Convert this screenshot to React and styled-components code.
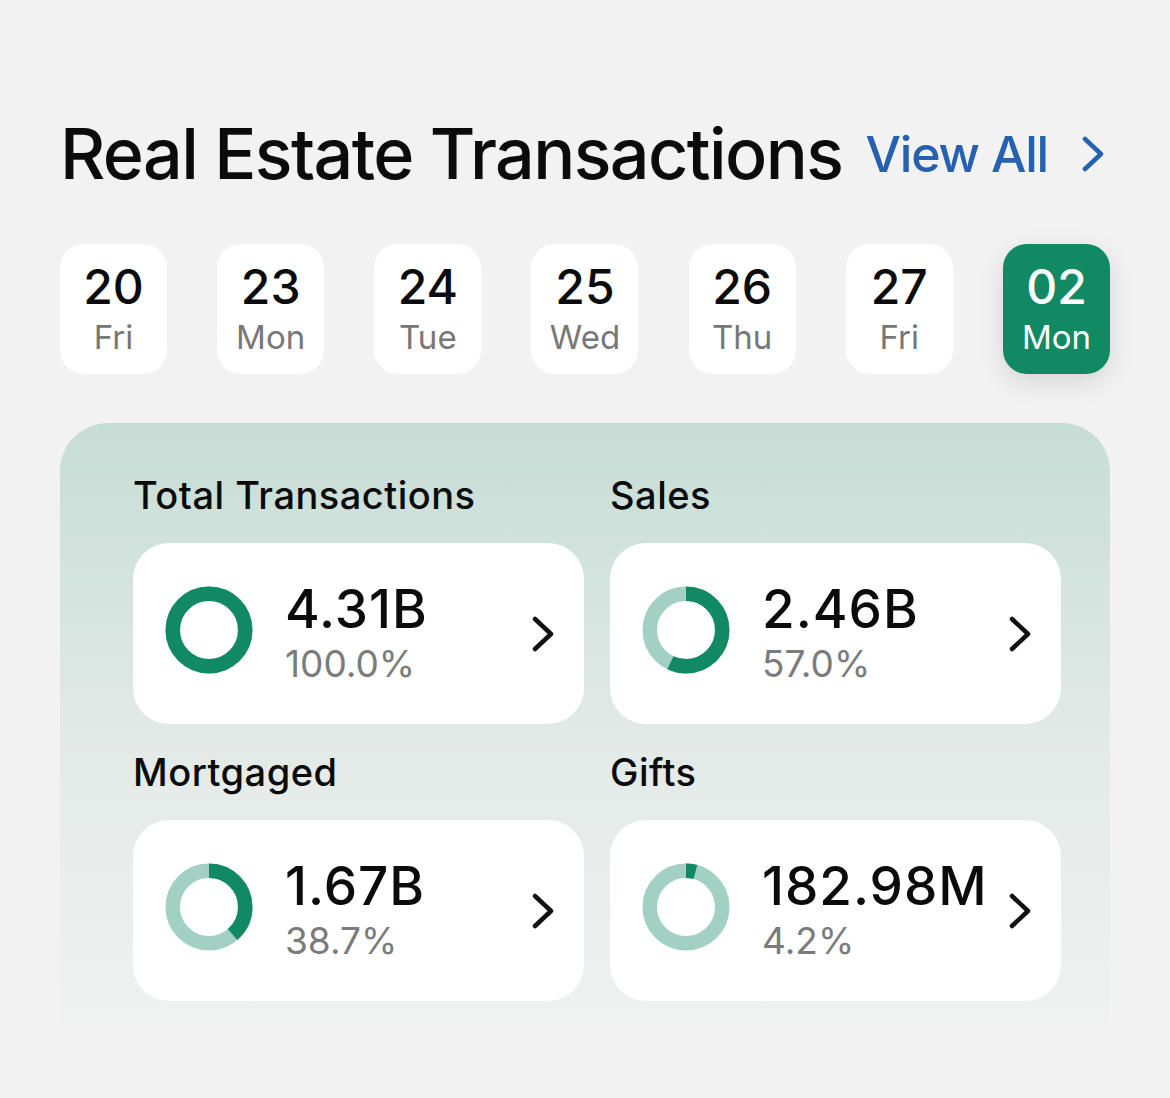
import React from 'react';
import styled, { createGlobalStyle, css } from 'styled-components';

const GlobalStyle = createGlobalStyle`
  body {
    margin: 0;
    background: #f2f2f2;
    font-family: Inter, "Noto Sans", sans-serif;
    -webkit-font-smoothing: antialiased;
  }
`;

const days = [
  { num: '20', day: 'Fri' },
  { num: '23', day: 'Mon' },
  { num: '24', day: 'Tue' },
  { num: '25', day: 'Wed' },
  { num: '26', day: 'Thu' },
  { num: '27', day: 'Fri' },
  { num: '02', day: 'Mon', active: true },
];

const stats = [
  { label: 'Total Transactions', value: '4.31B', pct: 100.0 },
  { label: 'Sales', value: '2.46B', pct: 57.0 },
  { label: 'Mortgaged', value: '1.67B', pct: 38.7 },
  { label: 'Gifts', value: '182.98M', pct: 4.2 },
];

const Chevron = ({ color = '#111', width = 22, height = 36, stroke = 4.5 }) => (
  <svg width={width} height={height} viewBox="0 0 22 36" fill="none">
    <polyline
      points="3,3 19,18 3,33"
      stroke={color}
      strokeWidth={stroke}
      strokeLinecap="round"
      strokeLinejoin="round"
    />
  </svg>
);

const Donut = ({ pct }) => {
  const r = 36.25;
  const c = 2 * Math.PI * r;
  return (
    <DonutSvg width="88" height="88" viewBox="0 0 88 88">
      <circle cx="44" cy="44" r={r} fill="none" stroke="#a2d1c3" strokeWidth="14.5" />
      <circle
        cx="44"
        cy="44"
        r={r}
        fill="none"
        stroke="#118a64"
        strokeWidth="14.5"
        strokeDasharray={`${(c * pct) / 100} ${c}`}
        transform="rotate(-90 44 44)"
      />
    </DonutSvg>
  );
};

const App = () => {
  return (
    <>
      <GlobalStyle />
      <Page>
        <Header>
          <Title>Real Estate Transactions</Title>
          <ViewAll>
            View All
            <Chevron color="#2660b0" width={22} height={36} stroke={4.5} />
          </ViewAll>
        </Header>

        <DateRow>
          {days.map((d, idx) => (
            <DateChip key={idx} active={d.active}>
              <DateNum>{d.num}</DateNum>
              <DateDay>{d.day}</DateDay>
            </DateChip>
          ))}
        </DateRow>

        <Panel>
          {stats.map((s, idx) => (
            <Stat key={idx}>
              <StatLabel>{s.label}</StatLabel>
              <StatCard>
                <Donut pct={s.pct} />
                <StatText>
                  <StatValue>{s.value}</StatValue>
                  <StatPct>{s.pct.toFixed(1)}%</StatPct>
                </StatText>
                <Chevron />
              </StatCard>
            </Stat>
          ))}
        </Panel>
      </Page>
    </>
  );
};

// custom styled components
const Page = styled.div`
  width: 1050px;
  padding: 112px 60px 48px;
`;

const Header = styled.div`
  display: flex;
  align-items: center;
  justify-content: space-between;
  white-space: nowrap;
`;

const Title = styled.h1`
  margin: 0;
  font-size: 70px;
  font-weight: 500;
  color: #0b0b0b;
  letter-spacing: -1.6px;
  line-height: 1.2;
`;

const ViewAll = styled.a`
  display: flex;
  align-items: center;
  gap: 34px;
  padding-right: 6px;
  font-size: 50px;
  font-weight: 500;
  line-height: 60px;
  letter-spacing: -1.2px;
  color: #2660b0;
`;

const DateRow = styled.div`
  display: flex;
  justify-content: space-between;
  margin-top: 48px;
`;

const DateChip = styled.div`
  width: 107px;
  height: 130px;
  border-radius: 24px;
  display: flex;
  flex-direction: column;
  align-items: center;
  justify-content: center;
  background: #fff;
  color: #0b0b0b;

  ${({ active }) =>
    active &&
    css`
      background: #118a64;
      color: #fff;
      box-shadow: 0 8px 26px rgba(0, 0, 0, 0.12);
      ${DateDay} {
        color: #fff;
      }
    `}
`;

const DateNum = styled.div`
  font-size: 48px;
  font-weight: 500;
  line-height: 54px;
  margin-bottom: 2px;
`;

const DateDay = styled.div`
  font-size: 33px;
  line-height: 42px;
  color: #777;
`;

const Panel = styled.div`
  margin-top: 49px;
  border-radius: 48px;
  background: linear-gradient(180deg, #c6ddd5 0%, #e2eae7 50%, #f2f2f2 100%);
  padding: 49px 49px 60px 73px;
  display: grid;
  grid-template-columns: 451px 451px;
  column-gap: 26px;
  row-gap: 25px;
`;

const Stat = styled.div`
  display: flex;
  flex-direction: column;
  gap: 25px;
`;

const StatLabel = styled.div`
  font-size: 38px;
  font-weight: 500;
  letter-spacing: 0.5px;
  color: #0b0b0b;
  line-height: 46px;
`;

const StatCard = styled.div`
  height: 181px;
  box-sizing: border-box;
  border-radius: 36px;
  background: #fff;
  display: flex;
  align-items: center;
  padding: 0 30px 0 32px;

  > svg:last-child {
    margin-left: auto;
    flex-shrink: 0;
  }
`;

const DonutSvg = styled.svg`
  flex-shrink: 0;
  margin-bottom: 7px;
`;

const StatText = styled.div`
  display: flex;
  flex-direction: column;
  margin-left: 32px;
`;

const StatValue = styled.div`
  font-size: 53px;
  font-weight: 500;
  letter-spacing: 1px;
  line-height: 56px;
  color: #0b0b0b;
`;

const StatPct = styled.div`
  margin-top: 4px;
  font-size: 37px;
  line-height: 46px;
  color: #7b7b7b;
`;

export default App;
